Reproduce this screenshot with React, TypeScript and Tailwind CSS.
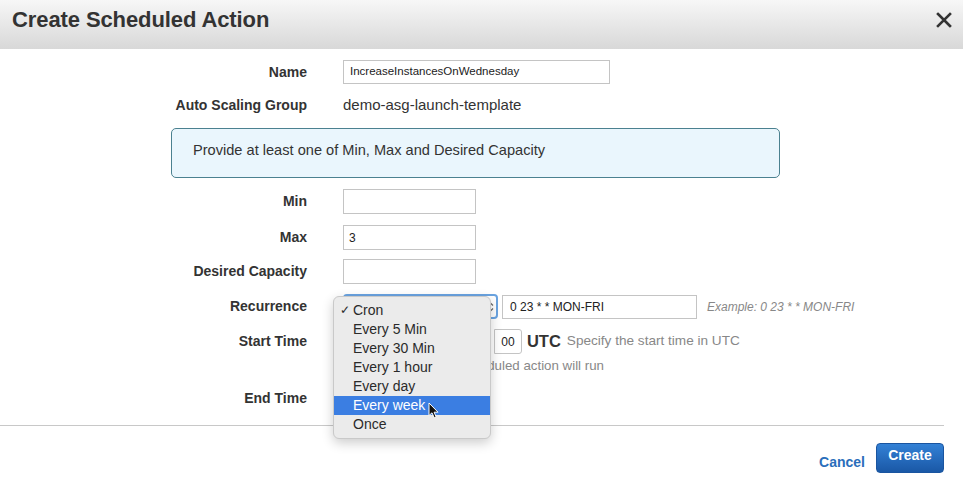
import React from "react";

const options = [
  "Cron",
  "Every 5 Min",
  "Every 30 Min",
  "Every 1 hour",
  "Every day",
  "Every week",
  "Once",
];

const Label = ({ children }: { children: React.ReactNode }) => (
  <div className="w-[307px] shrink-0 text-right text-[14px] font-bold text-[#333]">
    {children}
  </div>
);

const App = () => {
  return (
    <div
      className="relative w-[963px] h-[485px] overflow-hidden bg-white text-[#333]"
      style={{ fontFamily: '"Liberation Sans", Arial, sans-serif' }}
    >
      {/* Header */}
      <header className="h-[49px] flex items-start justify-between pl-[12px] pr-[12px] pt-[7px] bg-gradient-to-b from-[#f7f7f7] to-[#d8d8d8]">
        <h1 className="text-[22px] leading-[26px] font-bold text-[#333] tracking-[-0.1px]">
          Create Scheduled Action
        </h1>
        <svg width="16" height="16" viewBox="0 0 16 16" className="mt-[5px] mr-[-1px]">
          <path d="M2 2 L14 14 M14 2 L2 14" stroke="#333" strokeWidth="2.6" strokeLinecap="square" />
        </svg>
      </header>

      {/* Form */}
      <div className="flex flex-col">
        <div className="mt-[11px] h-[24px] flex items-center gap-[36px]">
          <Label>Name</Label>
          <div className="w-[267px] h-[24px] border border-[#c4c4c4] px-[6px] flex items-center text-[11.5px] text-[#222]">
            IncreaseInstancesOnWednesday
          </div>
        </div>

        <div className="mt-[9px] h-[24px] flex items-center gap-[36px]">
          <Label>Auto Scaling Group</Label>
          <div className="text-[15px] text-[#333]">demo-asg-launch-template</div>
        </div>

        <div className="mt-[11px] ml-[171px] w-[609px] h-[50px] rounded-[5px] border border-[#4b8190] bg-[#eaf6fd] pl-[21px] flex items-center text-[14.6px] text-[#333] pb-[5px]">
          Provide at least one of Min, Max and Desired Capacity
        </div>

        <div className="mt-[11px] h-[25px] flex items-center gap-[36px]">
          <Label>Min</Label>
          <div className="w-[133px] h-[25px] border border-[#c4c4c4]" />
        </div>

        <div className="mt-[11px] h-[25px] flex items-center gap-[36px]">
          <Label>Max</Label>
          <div className="w-[133px] h-[25px] border border-[#c4c4c4] px-[5px] flex items-center text-[12px] text-[#222]">
            3
          </div>
        </div>

        <div className="mt-[9px] h-[25px] flex items-center gap-[36px]">
          <Label>Desired Capacity</Label>
          <div className="w-[133px] h-[25px] border border-[#c4c4c4]" />
        </div>

        <div className="mt-[10px] h-[25px] flex items-center gap-[36px]">
          <Label>Recurrence</Label>
          <div className="flex items-center gap-[4px]">
            <div className="w-[155px] h-[25px] rounded-[4px] border-2 border-[#6aa3e0] bg-white flex items-center justify-end pr-[2px]">
              <svg width="7" height="12" viewBox="0 0 7 12">
                <path d="M1 4.5 L3.5 2 L6 4.5 M1 7.5 L3.5 10 L6 7.5" fill="none" stroke="#666" strokeWidth="1.2" />
              </svg>
            </div>
            <div className="w-[195px] h-[24px] border border-[#c4c4c4] px-[7px] flex items-center text-[12px] text-[#222]">
              0 23 * * MON-FRI
            </div>
            <div className="ml-[6px] text-[12px] italic text-[#888]">
              Example: 0 23 * * MON-FRI
            </div>
          </div>
        </div>

        <div className="mt-[10px] h-[25px] flex items-center gap-[36px]">
          <Label>Start Time</Label>
          <div className="flex items-center">
            <div className="w-[90px] h-[25px] border border-[#c4c4c4]" />
            <div className="ml-[6px] w-[42px] h-[25px] border border-[#c4c4c4]" />
            <span className="ml-[4px] text-[14px] text-[#333]">:</span>
            <div className="ml-[5px] w-[28px] h-[25px] border border-[#c4c4c4] rounded-r-[3px] flex items-center justify-center text-[12px] text-[#222]">
              00
            </div>
            <span className="ml-[5px] text-[16.5px] font-bold text-[#333]">UTC</span>
            <span className="ml-[6px] text-[13.6px] text-[#888]">Specify the start time in UTC</span>
          </div>
        </div>

        <div className="mt-[4px] h-[16px] flex items-center gap-[36px]">
          <div className="w-[307px] shrink-0" />
          <div className="w-[261px] text-right whitespace-nowrap text-[13.3px] text-[#888]">
            the scheduled action will run
          </div>
        </div>

        <div className="mt-[12px] h-[24px] flex items-center gap-[36px]">
          <Label>End Time</Label>
        </div>

        <div className="mt-[15px] w-[944px] h-px bg-[#c8c8c8]" />

        <div className="mt-[16px] w-[944px] flex items-center justify-end">
          <span className="mt-[10px] text-[14px] font-bold text-[#2a6ebb]">Cancel</span>
          <button className="ml-[11px] w-[68px] h-[30px] rounded-[4px] bg-gradient-to-b from-[#3381d6] to-[#1a58a6] border border-[#1a55a0] text-white text-[14px] font-bold pb-[4px]">
            Create
          </button>
        </div>
      </div>

      {/* Open select menu */}
      <div className="absolute left-[333px] top-[296px] w-[158px] py-[4px] rounded-[6px] border border-[#c9c9c9] bg-[#ebebeb] shadow-[0_4px_12px_rgba(0,0,0,0.2)]">
        {options.map((opt) => (
          <div
            key={opt}
            className={
              opt === "Every week"
                ? "relative h-[19px] flex items-center pl-[19px] text-[14px] bg-[#3b7ee2] text-white"
                : "relative h-[19px] flex items-center pl-[19px] text-[14px] text-[#2a2a2a]"
            }
          >
            {opt === "Cron" && (
              <span className="absolute left-[6px] top-0 text-[12px] leading-[19px]">✓</span>
            )}
            {opt}
          </div>
        ))}
      </div>

      {/* Mouse cursor */}
      <svg
        className="absolute left-[428px] top-[402px]"
        width="11"
        height="17"
        viewBox="0 0 11 17"
      >
        <path
          d="M1 1 L1 13.5 L4 10.8 L6.2 15.8 L8.2 15 L6.1 10.2 L10 10.2 Z"
          fill="#111"
          stroke="#fff"
          strokeWidth="1"
          strokeLinejoin="round"
        />
      </svg>
    </div>
  );
};

export default App;
